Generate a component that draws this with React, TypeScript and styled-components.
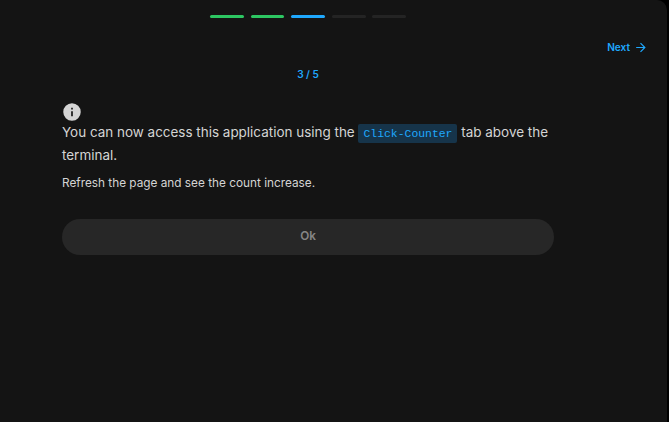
import React from "react";
import styled, { createGlobalStyle } from "styled-components";

const GlobalStyle = createGlobalStyle`
  * { box-sizing: border-box; }
  body { margin: 0; background: #000; font-family: Inter, "Liberation Sans", sans-serif; }
`;

const Panel = styled.main`
  width: 667px;
  height: 422px;
  background: #141414;
  border-top-right-radius: 10px;
  display: flex;
  flex-direction: column;
  overflow: hidden;
`;

const Progress = styled.div`
  display: flex;
  gap: 6.75px;
  margin: 15px 0 0 210.1px;
`;

type StepState = "done" | "current" | "pending";
const stepColors: Record<StepState, string> = {
  done: "#2dc662",
  current: "#1fa8fd",
  pending: "#242424",
};

const Step = styled.span<{ $state: StepState }>`
  width: 33.8px;
  height: 3px;
  border-radius: 1.5px;
  background: ${({ $state }) => stepColors[$state]};
`;

const Toolbar = styled.nav`
  display: flex;
  justify-content: flex-end;
  margin-top: 21px;
  padding-right: 20px;
`;

const NextButton = styled.button`
  display: flex;
  align-items: center;
  gap: 3.5px;
  height: 17px;
  padding: 0;
  border: 0;
  background: none;
  color: #1fa8fd;
  font: 600 10.08px/17px Inter, sans-serif;
`;

const NextArrow = styled.svg`
  width: 13px;
  height: 13px;
  margin-right: 0.5px;
`;

const Counter = styled.div`
  width: 616px;
  margin-top: 10px;
  text-align: center;
  color: #1fa8fd;
  font-size: 10.08px;
  font-weight: 600;
  line-height: 16px;
`;

const Content = styled.section`
  width: 492px;
  margin: 20px 0 0 62px;
  display: flex;
  flex-direction: column;
  color: #d4d4d4;
`;

const InfoIcon = styled.svg`
  display: block;
  width: 20px;
  height: 20px;
`;

const Lead = styled.p`
  margin: -1px 0 0;
  font-size: 13.46px;
  line-height: 23px;
`;

const Code = styled.code`
  padding: 3px 5px;
  border-radius: 2px;
  background: #16344a;
  color: #1fa8fd;
  font: 11.42px "Liberation Mono", monospace;
`;

const Hint = styled.p`
  margin: 6px 0 0;
  font-size: 11.8px;
  line-height: 20px;
`;

const OkButton = styled.button`
  margin-top: 26px;
  height: 36px;
  padding: 0 0 2px;
  border: 0;
  border-radius: 18px;
  background: #272727;
  color: #858585;
  font: 600 11.76px Inter, sans-serif;
`;

const steps: StepState[] = ["done", "done", "current", "pending", "pending"];

export default function App() {
  return (
    <>
      <GlobalStyle />
      <Panel>
        <Progress>
          {steps.map((state, i) => <Step key={i} $state={state} />)}
        </Progress>
        <Toolbar>
          <NextButton>
            Next
            <NextArrow viewBox="0 0 24 24" fill="none" stroke="currentColor" strokeWidth="2.2">
              <path d="M4 12h16M12 4l8 8-8 8" />
            </NextArrow>
          </NextButton>
        </Toolbar>
        <Counter>3 / 5</Counter>
        <Content>
          <InfoIcon viewBox="0 0 24 24" fill="currentColor">
            <path d="M12 1.5a10.5 10.5 0 1 0 0 21 10.5 10.5 0 0 0 0-21zm1 15.5h-2v-6h2v6zm0-8h-2V7h2v2z" />
          </InfoIcon>
          <Lead>
            You can now access this application using the <Code>Click-Counter</Code> tab above the terminal.
          </Lead>
          <Hint>Refresh the page and see the count increase.</Hint>
          <OkButton>Ok</OkButton>
        </Content>
      </Panel>
    </>
  );
}
